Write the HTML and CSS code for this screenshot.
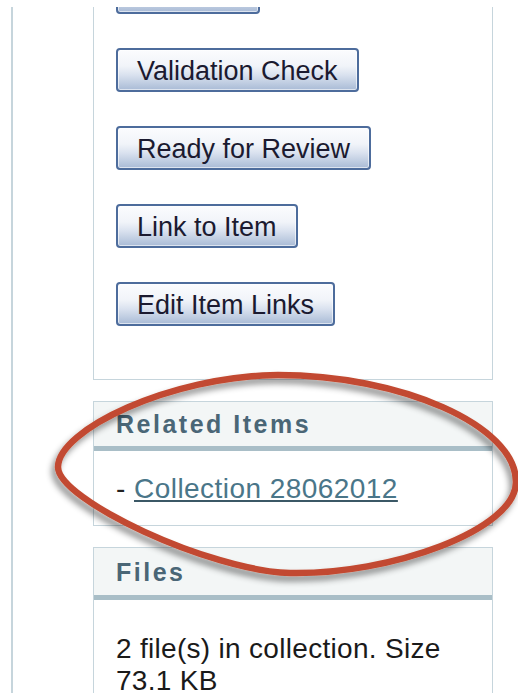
FILE: index.html
```html
<!DOCTYPE html>
<html lang="en">
<head>
<meta charset="utf-8">
<title>Item Actions</title>
<link rel="stylesheet" href="styles.css">
</head>
<body>
<div class="page">
  <div class="sidebar">
    <div class="actions">
      <button class="btn btn-offscreen" type="button" aria-label="Edit Item"></button>
      <button class="btn" type="button">Validation Check</button>
      <button class="btn" type="button">Ready for Review</button>
      <button class="btn" type="button">Link to Item</button>
      <button class="btn" type="button">Edit Item Links</button>
    </div>

    <div class="box">
      <div class="box-head">Related Items</div>
      <div class="box-body box-body-related">
        <span class="dash">-</span> <a class="item-link" href="#">Collection 28062012</a>
      </div>
    </div>

    <div class="box box-files">
      <div class="box-head">Files</div>
      <div class="box-body box-body-files">2 file(s) in collection. Size 73.1 KB</div>
    </div>
  </div>
</div>

<svg class="mark" width="518" height="693" viewBox="0 0 518 693" aria-hidden="true">
  <defs>
    <filter id="markShadow" x="-10%" y="-20%" width="120%" height="140%">
      <feDropShadow dx="-3" dy="5" stdDeviation="3" flood-color="#000" flood-opacity="0.45"/>
    </filter>
  </defs>
  <path d="M58,467 C58,430 170,376 278,375 C400,375 516,425 516,482 C516,530 390,575 290,573 C210,571 58,500 58,467 Z"
        fill="none" stroke="#c24a30" stroke-width="6.5" filter="url(#markShadow)"/>
</svg>
</body>
</html>
```

FILE: styles.css
```css
html, body {
  margin: 0;
  padding: 0;
  background: #fff;
}

body {
  position: relative;
  width: 518px;
  height: 693px;
  overflow: hidden;
  font-family: "Liberation Sans", Arial, sans-serif;
  color: #1a1a1a;
}

/* outer column frame, scrolled part-way down */
.page {
  margin: 7px 0 0 11px;
  height: 686px;
  border-left: 2px solid #c6d5dc;
  overflow: hidden;
}

.sidebar {
  margin-left: 80px;
  width: 400px;
}

/* action button panel */
.actions {
  margin-top: -37px;
  padding: 0 22px 53px;
  border: 1px solid #c6d5dc;
  border-top: none;
  display: flex;
  flex-direction: column;
  align-items: flex-start;
  gap: 34px;
}

.btn {
  height: 44px;
  padding: 2px 19px 0;
  border: 2px solid #4d6c9c;
  border-radius: 4px;
  background: linear-gradient(#fbfcfe 0%, #f1f4f9 40%, #dae2ef 62%, #a9bbd6 100%);
  box-shadow: inset 0 0 0 1px rgba(255, 255, 255, 0.6);
  font-family: "Liberation Sans", Arial, sans-serif;
  font-size: 27px;
  line-height: 38px;
  color: #1b1a30;
  cursor: pointer;
  white-space: nowrap;
}

/* button above the visible part of the panel */
.btn-offscreen {
  width: 144px;
}

/* titled info boxes */
.box {
  margin-top: 21px;
  border: 1px solid #c6d5dc;
}

.box-head {
  height: 44px;
  padding-left: 22px;
  background: #f3f6f6;
  border-bottom: 5px solid #a9bec7;
  font-size: 25px;
  font-weight: bold;
  line-height: 44px;
  letter-spacing: 2.5px;
  color: #4a6676;
}

.box-files .box-head {
  height: 47px;
  line-height: 48px;
}

.box-body {
  padding: 0 22px;
  font-size: 28px;
  line-height: 32px;
  letter-spacing: 0.3px;
  color: #1a1a1a;
}

.box-body-related {
  padding-top: 22px;
  padding-bottom: 20px;
  letter-spacing: 0.45px;
}

.box-body-files {
  padding-top: 33px;
  padding-bottom: 20px;
}

.dash {
  color: #222;
}

.item-link {
  color: #4a7689;
  text-decoration: underline;
  text-decoration-color: #3b5866;
}

/* annotation ring drawn over the page */
.mark {
  position: absolute;
  left: 0;
  top: 0;
  pointer-events: none;
}
```
